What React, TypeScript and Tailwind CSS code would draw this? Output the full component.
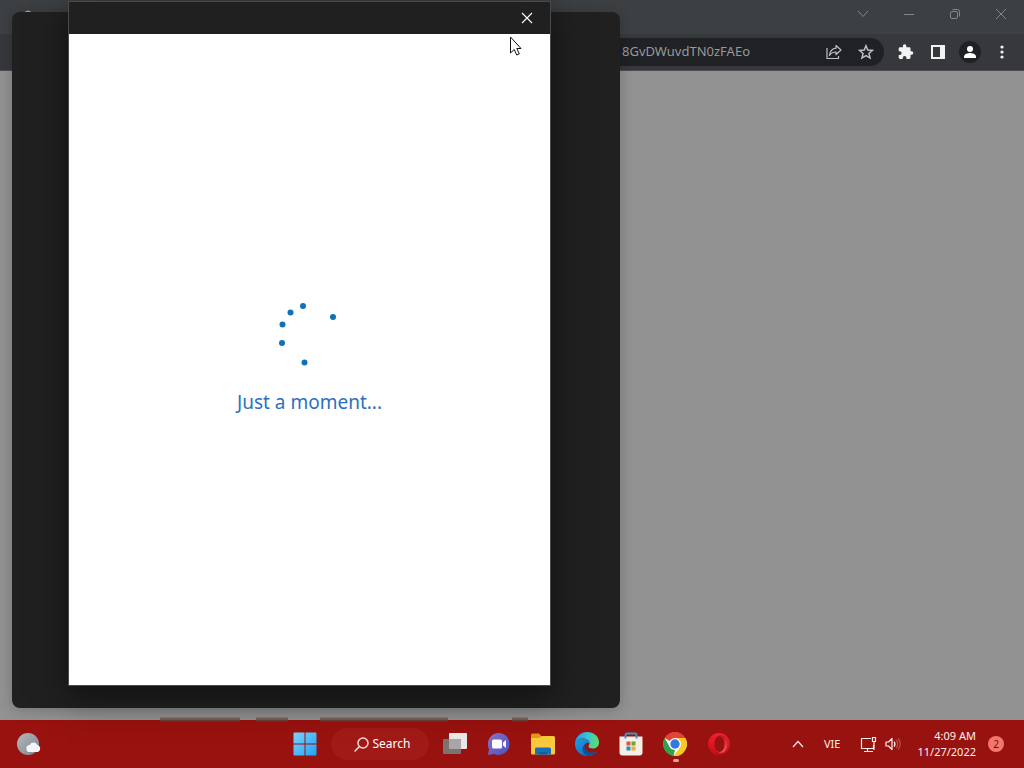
import React, { useState } from 'react';

const spinnerDots = [
  { x: 29, y: 4 },
  { x: 16.5, y: 10.5 },
  { x: 8.5, y: 22.5 },
  { x: 8, y: 41 },
  { x: 30.5, y: 60.5 },
  { x: 59, y: 15 },
];

function WindowControls() {
  const btn = 'w-[46px] h-7 flex items-center justify-center text-[#85888a]';
  return (
    <div className="flex justify-end">
      <button className={btn} aria-label="Search tabs">
        <svg width="12" height="8" viewBox="0 0 12 8" fill="none" stroke="currentColor"><path d="M1 1l5 5.5L11 1" /></svg>
      </button>
      <button className={btn} aria-label="Minimize">
        <svg width="12" height="12" viewBox="0 0 12 12" fill="none" stroke="currentColor"><path d="M1 6.5h10" /></svg>
      </button>
      <button className={btn} aria-label="Restore">
        <svg width="12" height="12" viewBox="0 0 12 12" fill="none" stroke="currentColor">
          <rect x="1.5" y="3.5" width="7" height="7" rx="1.5" />
          <path d="M3.5 1.5h5a2 2 0 0 1 2 2v5" />
        </svg>
      </button>
      <button className={btn} aria-label="Close window">
        <svg width="12" height="12" viewBox="0 0 12 12" fill="none" stroke="currentColor"><path d="M1 1l10 10M11 1L1 11" /></svg>
      </button>
    </div>
  );
}

function Toolbar() {
  const [url, setUrl] = useState('8GvDWuvdTN0zFAEo');
  const btn = 'w-8 h-7 flex items-center justify-center shrink-0';
  return (
    <div className="h-[37px] bg-[#37383b] border-b border-[#4b4c4e] flex items-center pl-24 pr-[6px]">
      <div className="flex-1 h-7 rounded-full bg-[#202125] flex items-center pr-[2px] text-[#bfc1c3] mr-[6px]">
        <input
          aria-label="Address"
          value={url}
          onChange={(e) => setUrl(e.target.value)}
          className="flex-1 min-w-0 bg-transparent outline-none text-right pr-[68px] text-[13px] text-[#97989b]"
        />
        <button className={btn} aria-label="Share">
          <svg width="16" height="16" viewBox="0 0 16 16" fill="none" stroke="currentColor" strokeWidth="1.2" strokeLinejoin="round">
            <path d="M1 4v10.5h11.5V12" />
            <path d="M10 1.5l5 4.5-5 4.5V8C7 8 5 9 3.500 11.500 4 7.500 6 4.500 10 4.200z" />
          </svg>
        </button>
        <button className={btn} aria-label="Bookmark this tab">
          <svg width="16" height="16" viewBox="0 0 24 24" fill="none" stroke="currentColor" strokeWidth="2.2">
            <path d="M12 2.500l2.700 6.600 7.100.5-5.400 4.600 1.700 6.900L12 17.400l-6.100 3.700 1.700-6.900-5.400-4.600 7.100-.5z" />
          </svg>
        </button>
      </div>
      <button className={btn} aria-label="Extensions">
        <svg width="16" height="16" viewBox="1 1 23 22" fill="#f1f3f4">
          <path d="M20.500 11H19V7a2 2 0 0 0-2-2h-4V3.500a2.500 2.500 0 0 0-5 0V5H4a2 2 0 0 0-2 2v3.800h1.500a2.700 2.700 0 0 1 0 5.400H2V20a2 2 0 0 0 2 2h3.800v-1.500a2.700 2.700 0 0 1 5.400 0V22H17a2 2 0 0 0 2-2v-4h1.500a2.500 2.500 0 0 0 0-5z" />
        </svg>
      </button>
      <button className={btn} aria-label="Side panel">
        <svg width="14" height="14" viewBox="0 0 14 14" fill="none">
          <rect x="1" y="1" width="12" height="12" stroke="#f1f3f4" strokeWidth="2" />
          <path d="M9 1h4v12H9z" fill="#f1f3f4" />
        </svg>
      </button>
      <button className={btn} aria-label="Profile">
        <svg width="22" height="22" viewBox="0 0 22 22">
          <circle cx="11" cy="11" r="11" fill="#202125" />
          <circle cx="11" cy="8" r="3" fill="#fff" />
          <path d="M5 17v-1.500c0-2.500 4-3.500 6-3.500s6 1 6 3.500V17z" fill="#fff" />
        </svg>
      </button>
      <button className={btn} aria-label="Menu">
        <svg width="4" height="14" viewBox="0 0 4 14" fill="#f1f3f4">
          <circle cx="2" cy="2" r="1.6" /><circle cx="2" cy="7" r="1.6" /><circle cx="2" cy="12" r="1.6" />
        </svg>
      </button>
    </div>
  );
}

function SignInDialog() {
  return (
    <section
      role="dialog"
      aria-label="Sign in"
      className="absolute left-[68px] top-px bottom-[82px] w-[483px] flex flex-col bg-white border border-[#4a4a4a] shadow-[0_10px_32px_rgba(0,0,0,0.5)]"
    >
      <header className="h-8 shrink-0 bg-[#202020] flex justify-end">
        <button aria-label="Close" className="w-[46px] flex items-center justify-center text-white">
          <svg width="12" height="12" viewBox="0 0 12 12" fill="none" stroke="currentColor" strokeWidth="1.1"><path d="M1 1l10 10M11 1L1 11" /></svg>
        </button>
      </header>
      <div className="flex-1 flex flex-col items-center justify-center gap-[22px] pb-[2px]">
        <svg width="72" height="64" viewBox="0 0 72 64" fill="#0f72b8">
          {spinnerDots.map((d, i) => (
            <circle key={i} cx={d.x} cy={d.y} r="3" />
          ))}
        </svg>
        <p className="text-[19px] leading-7 text-[#2c70bf]">Just a moment...</p>
      </div>

      {/* Mouse pointer */}
      <svg className="absolute right-7 top-[34px] pointer-events-none" width="13" height="20" viewBox="0 0 13 20">
        <path d="M1.500 1v16l3.700-3.500 2.500 5.500 2.600-1.100-2.500-5.400H12z" fill="#fff" stroke="#111" />
      </svg>
    </section>
  );
}

function StartIcon() {
  return (
    <svg width="24" height="24" viewBox="0 0 24 24">
      <defs>
        <linearGradient id="win" x1="0" y1="0" x2="1" y2="1">
          <stop offset="0" stopColor="#7fd3fb" /><stop offset="1" stopColor="#1fa2f5" />
        </linearGradient>
      </defs>
      <path fill="url(#win)" d="M1.500.5h10v11H.5v-10a1 1 0 0 1 1-1zM12.500.5h10a1 1 0 0 1 1 1v10h-11zM.5 12.500h11v11h-10a1 1 0 0 1-1-1zM12.500 12.500h11v10a1 1 0 0 1-1 1h-10z" />
    </svg>
  );
}

function TaskViewIcon() {
  return (
    <svg width="24" height="24" viewBox="0 0 24 24">
      <rect x="6" y="1" width="18" height="16" rx="1" fill="#e9e7e7" />
      <rect x="0" y="7" width="18" height="15" rx="1" fill="#7b7373" />
      <path d="M6 7h12v10H6z" fill="#aaa6a6" />
    </svg>
  );
}

function ChatIcon() {
  return (
    <svg width="24" height="24" viewBox="0 0 24 24">
      <defs>
        <linearGradient id="chat" x1="0" y1="0" x2="1" y2="1">
          <stop offset="0" stopColor="#8d72c6" /><stop offset="1" stopColor="#4951c4" />
        </linearGradient>
      </defs>
      <path d="M12 1a11 11 0 1 1-5 21L1 23l1-6A11 11 0 0 1 12 1z" fill="url(#chat)" />
      <rect x="5" y="7.500" width="10" height="9" rx="1.5" fill="#fff" />
      <path d="M16 10.500l3-2.500v8l-3-2.500z" fill="#fff" />
    </svg>
  );
}

function ExplorerIcon() {
  return (
    <svg width="24" height="24" viewBox="0 0 24 24">
      <path d="M0 3a1.500 1.500 0 0 1 1.500-1.500H8L11 5v4H0z" fill="#e39a12" />
      <path d="M0 6h8l3-2h11.500A1.500 1.500 0 0 1 24 5.500V21a1.500 1.500 0 0 1-1.500 1.500h-21A1.500 1.500 0 0 1 0 21z" fill="#fdc93c" />
      <path d="M4 22.500V17a1.500 1.500 0 0 1 1.500-1.500h13A1.500 1.500 0 0 1 20 17v5.500z" fill="#1670b8" />
      <path d="M8 22.500V20h8v2.500z" fill="#0f5fa3" />
    </svg>
  );
}

function EdgeIcon() {
  return (
    <svg width="24" height="24" viewBox="0 0 24 24">
      <defs>
        <linearGradient id="edgeTop" x1="0" y1="0.3" x2="1" y2="0.5">
          <stop offset="0" stopColor="#1d9bea" /><stop offset="0.5" stopColor="#36c5d5" /><stop offset="1" stopColor="#5fdc6c" />
        </linearGradient>
        <linearGradient id="edgeBody" x1="0" y1="0" x2="1" y2="1">
          <stop offset="0" stopColor="#1c9ce8" /><stop offset="1" stopColor="#1262b5" />
        </linearGradient>
      </defs>
      <path d="M0 11C1 4 6 0 12 0c7 0 12 4.500 12 10.500 0 3.500-2.500 6-6 6-3 0-4.500-1-4.500-2s1-1.500 1-3.200C14.500 8.500 11.500 6.500 8 6.500 4.500 6.500 1.500 8.500 0 11z" fill="url(#edgeTop)" />
      <path d="M0 11c1.500-2.500 4.500-4.500 8-4.500 3.500 0 6.500 2 6.500 5C14 10 9 11 9 15c0 4 4 6 8 6 2 0 4-.6 5.300-1.500C20 22.500 16.500 24 12 24 5 24-.5 18 0 11z" fill="url(#edgeBody)" />
      <path d="M9.500 13c-2 1.500-2.500 4-1.500 6.500 1 2.500 3 4 5.500 4.400 4-.4 7-2 8.800-4.400C17 22 9.500 20 9.500 13z" fill="#124f96" />
    </svg>
  );
}

function StoreIcon() {
  return (
    <svg width="24" height="24" viewBox="0 0 24 24">
      <path d="M.5 4.500h23v16a3 3 0 0 1-3 3h-17a3 3 0 0 1-3-3z" fill="#f4f0e8" />
      <path d="M6.500 6.500V3A1.500 1.500 0 0 1 8 1.500h8A1.500 1.500 0 0 1 17.500 3v3.500" fill="none" stroke="#3e94c9" strokeWidth="2" />
      <path d="M7.500 9.500h4v4h-4z" fill="#e1533a" />
      <path d="M12.500 9.500h4v4h-4z" fill="#6da52d" />
      <path d="M7.500 14.500h4v4h-4z" fill="#2a8dbd" />
      <path d="M12.500 14.500h4v4h-4z" fill="#eeb02c" />
    </svg>
  );
}

function ChromeIcon() {
  return (
    <svg width="24" height="24" viewBox="0 0 24 24">
      <circle cx="12" cy="12" r="11.5" fill="#fff" />
      <path d="M12 12L1.600 6A12 12 0 0 1 22.400 6L12 6z" fill="#e54335" />
      <path d="M1.600 6l5.200 9L12 18l-1.500 5.900A12 12 0 0 1 1.600 6z" fill="#2fa24c" />
      <path d="M12 6h10.400A12 12 0 0 1 10.500 23.900L17.200 15z" fill="#fbc926" />
      <circle cx="12" cy="12" r="6" fill="#fff" />
      <circle cx="12" cy="12" r="4.7" fill="#3478e2" />
    </svg>
  );
}

function OperaIcon() {
  return (
    <svg width="24" height="24" viewBox="0 0 24 24">
      <defs>
        <linearGradient id="opera" x1="0" y1="0" x2="0" y2="1">
          <stop offset="0" stopColor="#f3202d" /><stop offset="1" stopColor="#c40d1b" />
        </linearGradient>
        <linearGradient id="operaSide" x1="0" y1="0" x2="0" y2="1">
          <stop offset="0" stopColor="#c81420" /><stop offset="1" stopColor="#f2575c" />
        </linearGradient>
      </defs>
      <path fillRule="evenodd" d="M12 1a11 11 0 1 0 0 22 11 11 0 0 0 0-22zm.5 3c3 0 5 3.500 5 8s-2 8-5 8-5-3.500-5-8 2-8 5-8z" fill="url(#opera)" />
      <path d="M9 5.500C10.500 3.500 14 2.500 17 4a10.800 10.800 0 0 1 0 16c-3 1.500-6.500.5-8-1.500 1 .9 2.200 1.500 3.500 1.500 3 0 5-3.500 5-8s-2-8-5-8C11 4 10 4.500 9 5.500z" fill="url(#operaSide)" />
    </svg>
  );
}

const pinnedApps = [
  { name: 'Task View', Icon: TaskViewIcon },
  { name: 'Chat', Icon: ChatIcon },
  { name: 'File Explorer', Icon: ExplorerIcon },
  { name: 'Microsoft Edge', Icon: EdgeIcon },
  { name: 'Microsoft Store', Icon: StoreIcon },
  { name: 'Google Chrome', Icon: ChromeIcon, running: true },
  { name: 'Opera', Icon: OperaIcon },
];

// widths of the faint marks, the gap between groups comes from ml
const edgeMarks = ['w-20', 'w-8 ml-4', 'w-32 ml-8', 'w-4 ml-16'];

function Taskbar() {
  return (
    <footer className="relative h-12 shrink-0 bg-[#98120f] grid grid-cols-[1fr_auto_1fr] items-center text-white">
      <div className="absolute left-40 -top-[3px] flex pointer-events-none">
        {edgeMarks.map((cls) => (
          <div key={cls} className={`h-[5px] bg-linear-to-b from-[#7a7270]/60 to-[#6b2f2c] ${cls}`} />
        ))}
      </div>

      <button aria-label="Widgets" className="ml-4 w-7 h-7">
        <svg width="26" height="26" viewBox="0 0 26 26">
          <defs>
            <linearGradient id="moon" x1="0" y1="0" x2="1" y2="1">
              <stop offset="0" stopColor="#b4b8bb" /><stop offset="1" stopColor="#7d8790" />
            </linearGradient>
          </defs>
          <circle cx="12" cy="13" r="11" fill="url(#moon)" />
          <path d="M14 21a3.500 3.500 0 0 1-.3-7 4.200 4.200 0 0 1 7.600 0 3.600 3.600 0 0 1 .2 7z" fill="#f3f5fa" />
        </svg>
      </button>

      <nav className="flex items-center">
        <button aria-label="Start" className="w-11 h-11 flex items-center justify-center"><StartIcon /></button>
        <button className="mx-1 w-[98px] h-8 rounded-full bg-[#a01a17] flex items-center justify-center gap-1 pl-1 text-[12px]">
          <svg width="15" height="15" viewBox="0 0 15 15" fill="none" stroke="#f7dcd8" strokeWidth="1.5" strokeLinecap="round">
            <circle cx="9" cy="6" r="5" /><path d="M5.300 9.700L1 14" />
          </svg>
          Search
        </button>
        {pinnedApps.map(({ name, Icon, running }) => (
          <button key={name} aria-label={name} className="relative w-11 h-11 flex items-center justify-center">
            <Icon />
            {running && <span className="absolute bottom-1 left-5 w-[6px] h-[3px] rounded-full bg-[#e79f97]" />}
          </button>
        ))}
      </nav>

      <div className="flex items-center justify-end pr-5 text-[11px] text-[#fdeeec]">
        <button aria-label="Show hidden icons" className="mr-5">
          <svg width="12" height="8" viewBox="0 0 12 8" fill="none" stroke="currentColor" strokeWidth="1.2"><path d="M1 7l5-5.500L11 7" /></svg>
        </button>
        <button className="mr-5">VIE</button>
        <button aria-label="Network and volume" className="flex items-center gap-2 mr-4">
          <svg width="17" height="17" viewBox="0 0 17 17" fill="none" stroke="currentColor" strokeWidth="1.2">
            <path d="M11 2.500H1.500v10h12V9M7.500 12.500v3M4 15.500h9" />
            <path d="M12.500 1.500h3v4h-3zM14 5.500V14" />
          </svg>
          <svg width="16" height="14" viewBox="0 0 16 14" fill="none" stroke="currentColor" strokeWidth="1.2">
            <path d="M1 5h2.500L7 1.500v11L3.500 9H1z" strokeLinejoin="round" />
            <path d="M9 4.500a4 4 0 0 1 0 5" />
            <path d="M11 3a6 6 0 0 1 0 8M13 1.500a8 8 0 0 1 0 11" opacity="0.3" />
          </svg>
        </button>
        <button className="text-right leading-4">
          <span className="block">4:09 AM</span>
          <span className="block">11/27/2022</span>
        </button>
        <span className="ml-3 w-4 h-4 rounded-full bg-[#f4766c] text-[#5c120e] text-[10px] flex items-center justify-center">2</span>
      </div>
    </footer>
  );
}

export default function App() {
  return (
    <div className="relative min-h-screen flex flex-col overflow-hidden bg-[#929292] font-['Noto_Sans','Open_Sans',sans-serif]">
      <header className="bg-[#3c4043]">
        <div className="h-[34px] relative">
          <WindowControls />
          <svg className="absolute left-[22px] top-[9px]" width="12" height="12" viewBox="0 0 12 12" fill="none" stroke="#a9abad" strokeWidth="1.6"><path d="M2 4.500Q6 0 10 4.500" /></svg>
        </div>
        <Toolbar />
      </header>
      <main className="flex-1" />
      <Taskbar />

      {/* Security prompt window, with the sign in dialog over it */}
      <div className="absolute left-3 top-3 bottom-[60px] w-[608px] rounded-lg bg-[#202020] shadow-[0_2px_14px_rgba(0,0,0,0.2)]" />
      <SignInDialog />
    </div>
  );
}
